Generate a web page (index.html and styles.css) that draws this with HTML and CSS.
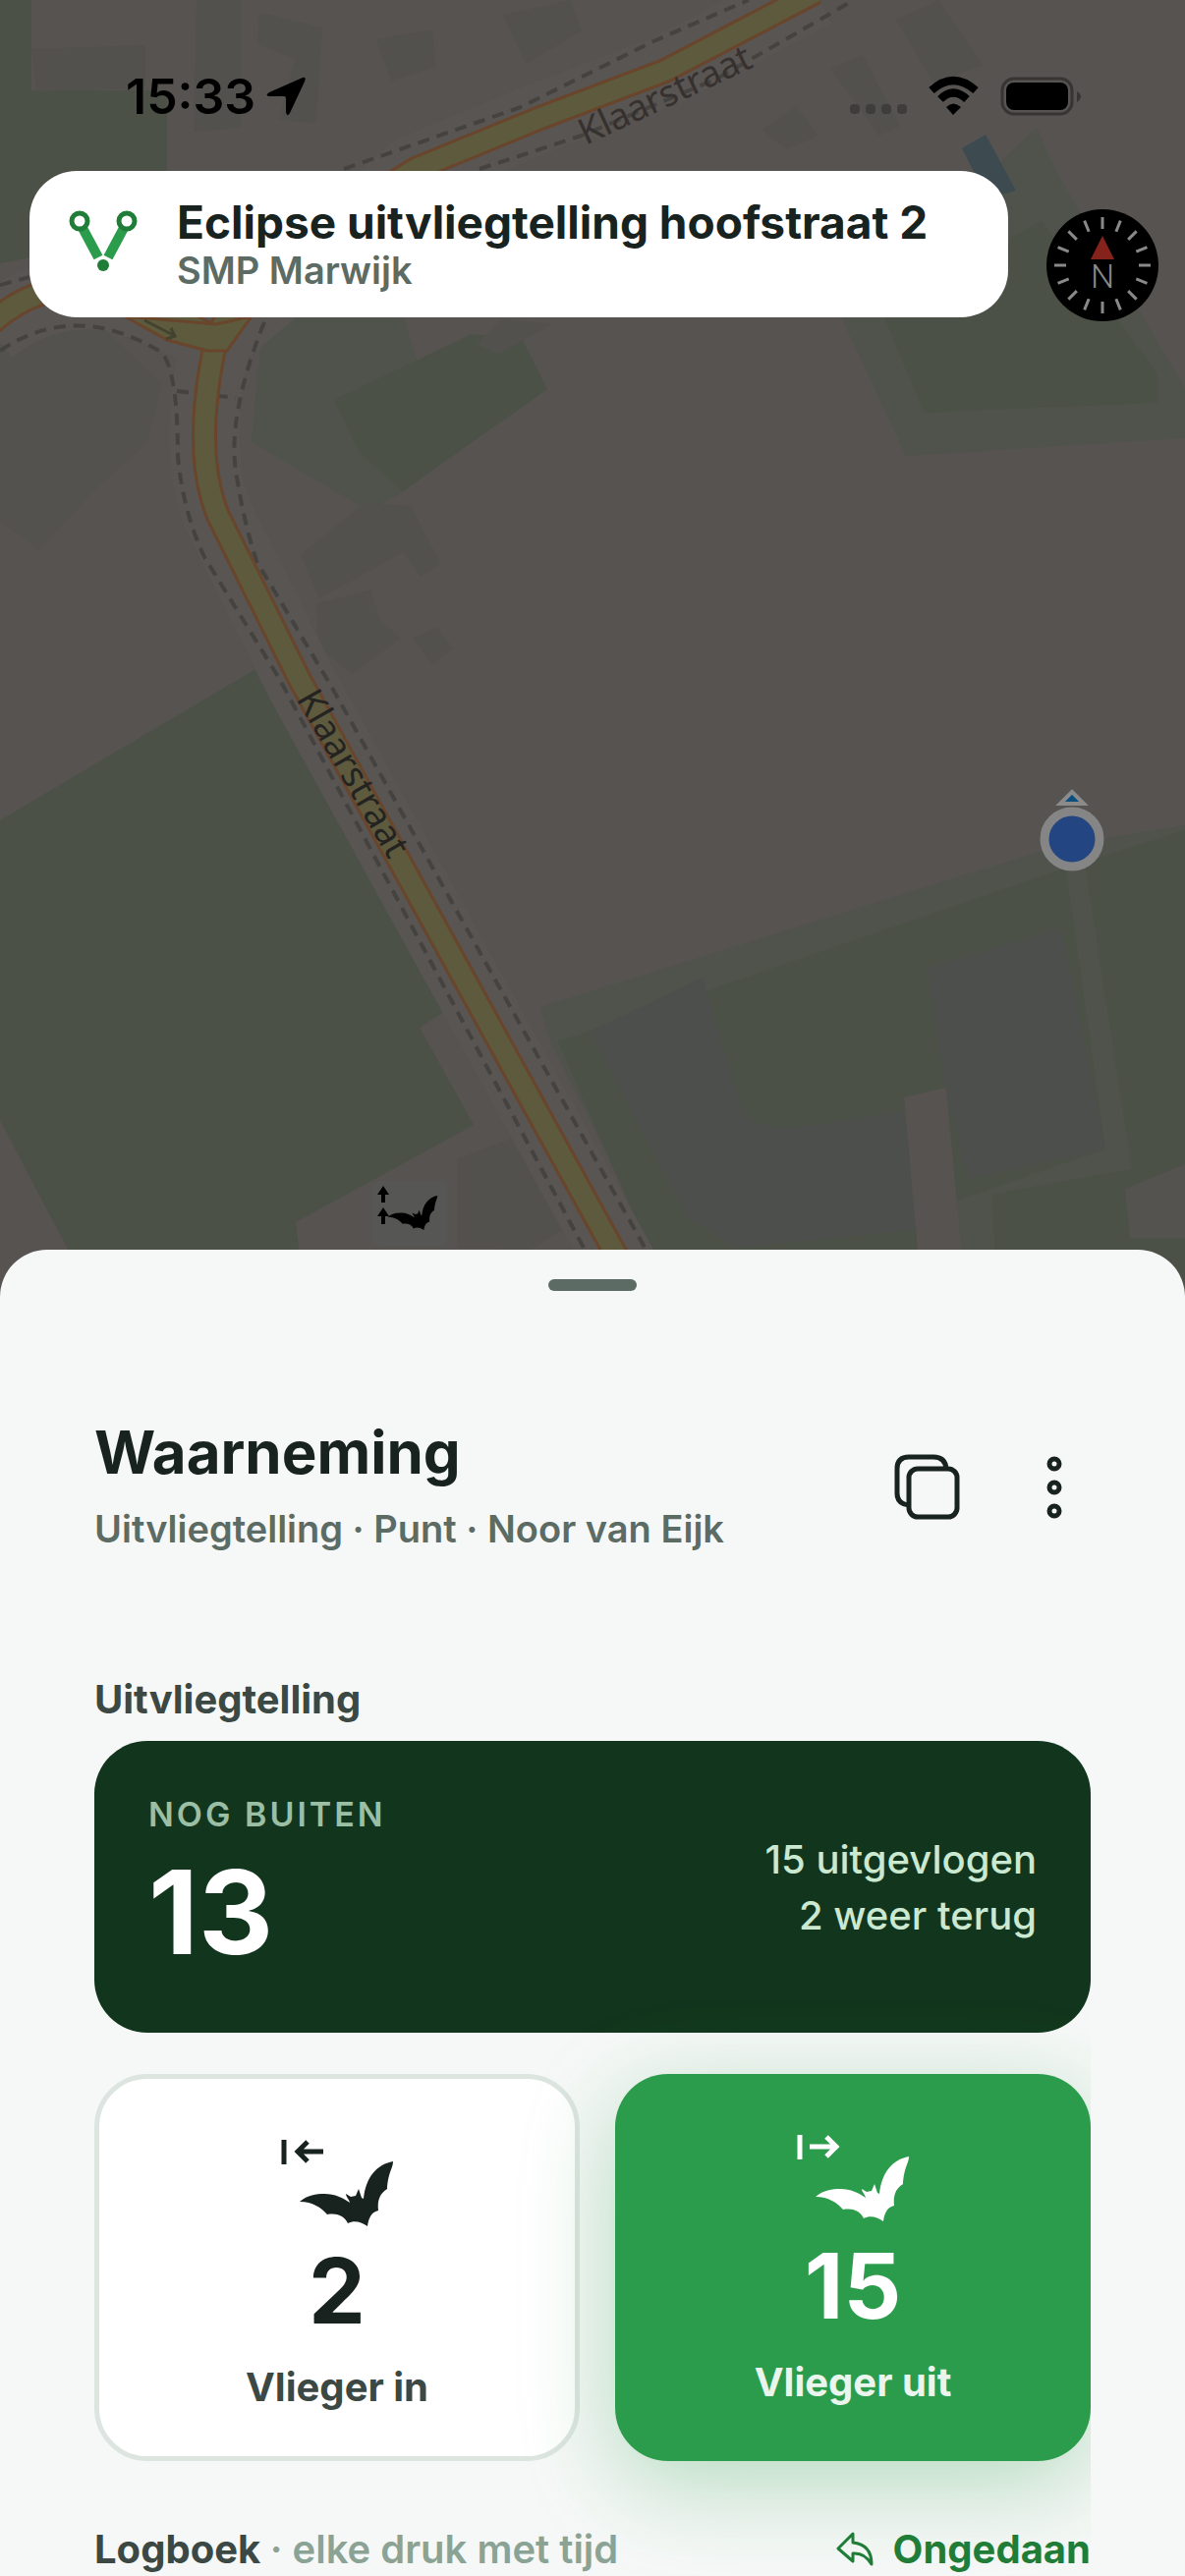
FILE: index.html
```
<!DOCTYPE html>
<html lang="nl">
<head>
  <meta charset="UTF-8">
  <meta name="viewport" content="width=device-width, initial-scale=1.0">
  <title>Waarneming</title>
  <link rel="stylesheet" href="styles.css">
</head>
<body>
  <svg class="symbols" aria-hidden="true">
    <symbol id="bat" viewBox="0 0 95 66">
      <path d="M0 41C8 34 17 33 25 33C36 33 44 37 51 42C50 38 47 36 47 33L52 36L57 35L60 28L63 37L65 38C67 17 78 3 95 0C95 7 90 11 89 28C81 33 79 40 80 50C72 52 70 59 69 66C62 61 55 60 49 63C46 57 40 52 28 54C22 47 13 41 0 41Z"/>
    </symbol>
  </svg>

  <div class="map">
    <svg class="map-tiles" viewBox="0 0 1206 1340" preserveAspectRatio="xMidYMin slice" aria-hidden="true">
      <rect width="1206" height="1340" fill="#565351"/>
      <!-- fields -->
      <path fill="#4b5146" d="M0 0H32V92H170V235L0 268Z"/>
      <path fill="#53524e" d="M0 330L100 330L165 390L150 450L95 500L40 560L0 530Z"/>
      <path fill="#50534c" d="M268 320H410L425 370L480 345L412 500L375 520L256 450Z"/>
      <path fill="#4b5146" d="M340 407L480 340L532 346L557 396L410 500L365 460Z"/>
      <path fill="#50534c" d="M855 320L1055 130L1075 175L1206 395V446L922 464Z"/>
      <path fill="#4b5146" d="M895 310L1060 225L1178 380V410L940 420Z"/>
      <path fill="#4b5146" d="M0 835L262 680L460 1025L427 1046L482 1145L301 1244L312 1340H105L0 1140Z"/>
      <path fill="#50534c" d="M550 1025L1080 860L1206 840V1340H700L560 1060Z"/>
      <path fill="#4b5146" d="M568 1060L1080 885L1206 845V1340H690Z"/>
      <path fill="#4d4f4c" d="M600 1050L715 995L755 1130Q775 1155 830 1145L925 1130L945 1250L750 1270L700 1240Z"/>
      <path fill="#4d4f4c" d="M944 985L1080 945L1125 1170L985 1200L962 1110Z"/>
      <path fill="#50534c" d="M1085 885H1105L1152 1190L1010 1215L1015 1340H930L950 1230L1125 1170Z"/>
      <path fill="#565351" d="M920 1117L963 1107L985 1340H940Z"/>
      <path fill="#555350" d="M1145 1210L1206 1185V1260L1150 1260Z"/>
      <path fill="#3d4a50" d="M979 151L1003 137L1034 194L1005 202Z"/>
      <!-- buildings -->
      <g fill="#53514e">
        <path d="M32 50L148 46V90L37 93Z"/>
        <path d="M200 0H245V130L197 134Z"/>
        <path d="M264 12L328 28L322 125L284 122L300 60L262 45Z"/>
        <path d="M383 40L440 30L444 68L398 82Z"/>
        <path d="M512 15L580 0L592 32L535 65Z"/>
        <path d="M912 20L955 0L1000 66L950 85Z"/>
        <path d="M845 70L878 56L916 128L895 138Z"/>
        <path d="M776 132L810 108L833 138L800 152Z"/>
        <path d="M306 565L370 512L418 515L449 574L428 587L410 562L325 609Z"/>
        <path d="M322 615L378 600L386 630L408 650L358 686L325 660Z"/>
        <path d="M420 650L444 638L461 660L440 677Z"/>
        <path d="M465 1180L530 1155L575 1250L540 1272L465 1270Z"/>
        <path d="M485 350L512 325L562 330L507 360Z"/>
      </g>
      <!-- roads -->
      <g fill="none" stroke-linejoin="round">
        <path stroke="#585553" stroke-width="72" d="M-10 335Q55 285 130 305Q195 330 220 345L423 172L550 120L677 72L830 -8M220 345Q195 460 222 525L304 690L645 1310"/>
        <path stroke="#454340" stroke-width="4" stroke-dasharray="12 8" d="M0 357Q77 305 165 359Q181 380 181 464Q186 520 208 567L285 692L610 1300M350 172L530 109L665 42L762 0M488 172L592 138L730 80L869 0M269 328Q228 430 242 491Q248 530 261 571L338 700L673 1300M180 398L240 405M0 290L30 282"/>
        <path stroke="#69452c" stroke-width="26" d="M-10 330Q50 275 130 300Q185 325 220 345C240 290 330 230 423 172L550 120L677 72L830 -8M220 345Q195 460 222 525L304 690L645 1310"/>
        <path stroke="#5d5a3e" stroke-width="20" d="M-10 330Q50 275 130 300Q185 325 220 345C240 290 330 230 423 172L550 120L677 72L830 -8M220 345Q195 460 222 525L304 690L645 1310"/>
      </g>
      <path fill="#5d5a3e" stroke="#69452c" stroke-width="3" d="M127 322L170 346L211 357H231L256 322L220 330Z"/>
      <path stroke="#444330" stroke-width="3" fill="none" d="M147 326L178 342M169 345L178 342L174 334"/>
      <g class="street">
        <text fill="#36312e" transform="translate(596 148) rotate(-25)">Klaarstraat</text>
        <text fill="#242321" transform="translate(301 711) rotate(60)">Klaarstraat</text>
      </g>
    </svg>

    <svg class="pin-bat" viewBox="0 0 80 70" aria-hidden="true">
      <rect width="75" height="66" rx="6" fill="#565655"/>
      <path d="M10 5L16 14H12V22H8V14H4ZM10 27L16 36H12V44H8V36H4Z"/>
      <use href="#bat" x="14" y="15" width="52" height="35"/>
    </svg>
    <svg class="pin-me" viewBox="0 0 70 90" aria-hidden="true">
      <path fill="#0a4f7e" stroke="#8b8b8b" stroke-width="4" d="M35 6L47 18H23Z"/>
      <circle cx="35" cy="54" r="28" fill="#234581" stroke="#858585" stroke-width="9"/>
    </svg>
  </div>

  <header class="top">
    <div class="statusbar">
      <div class="clock">
        <span>15:33</span>
        <svg width="42" height="42" viewBox="0 0 42 42" aria-hidden="true"><path d="M38 2Q42 1 40 6L25 38Q22 43 21 37V23Q21 21 19 21H4Q-1 20 4 17Z"/></svg>
      </div>
      <svg class="signals" width="240" height="44" viewBox="0 0 240 44" aria-hidden="true">
        <g fill="#3f3d3b"><rect y="30" width="10" height="10" rx="4"/><rect x="16" y="30" width="10" height="10" rx="4"/><rect x="32" y="30" width="10" height="10" rx="4"/><rect x="48" y="30" width="10" height="10" rx="4"/></g>
        <g fill="none" stroke="#000" stroke-width="8"><path d="M83 16Q105 -4 128 16"/><path d="M92 25Q105 12 119 25"/></g>
        <path d="M98 33Q105 26 113 33L105 41Z"/>
        <rect x="155" y="4" width="71" height="36" rx="12" fill="none" stroke="#363534" stroke-width="3"/>
        <rect x="159" y="8" width="63" height="28" rx="8"/>
        <path fill="#363534" d="M231 17Q239 22 231 28Z"/>
      </svg>
    </div>

    <div class="project-row">
      <div class="project">
        <svg width="76" height="76" viewBox="0 0 76 76" aria-hidden="true">
          <path fill="none" stroke="#2b9c4b" stroke-width="10" d="M16 21L32 51M58 21L42 51"/>
          <circle cx="13" cy="14" r="8" fill="#fff" stroke="#1f7d38" stroke-width="5"/>
          <circle cx="61" cy="14" r="8" fill="#fff" stroke="#1f7d38" stroke-width="5"/>
          <circle cx="37" cy="59" r="6" fill="#1f7d38"/>
        </svg>
        <div>
          <h1>Eclipse uitvliegtelling hoofstraat 2</h1>
          <p>SMP Marwijk</p>
        </div>
      </div>
      <button class="compass" type="button" aria-label="Kompas">
        <svg viewBox="-57 -57 114 114" aria-hidden="true">
          <circle r="57"/>
          <g stroke="#898989" stroke-width="3">
            <path id="ticks" d="M0 -49V-37M0 37V49M-49 0H-37M37 0H49"/>
            <use href="#ticks" transform="rotate(22)"/>
            <use href="#ticks" transform="rotate(45)"/>
            <use href="#ticks" transform="rotate(68)"/>
          </g>
          <path fill="#86221c" d="M0 -30L12 -6H-12Z"/>
          <text y="23">N</text>
        </svg>
      </button>
    </div>
  </header>

  <main class="sheet">
    <div class="grabber"></div>

    <div class="sheet-head">
      <div>
        <h2>Waarneming</h2>
        <p>Uitvliegtelling · Punt · Noor van Eijk</p>
      </div>
      <div class="actions">
        <button type="button" aria-label="Kopiëren">
          <svg width="72" height="72" viewBox="0 0 72 72" aria-hidden="true">
            <rect x="15" y="17" width="49" height="49" rx="9"/>
            <path d="M15 54Q3 53 3 42V17Q3 5 15 5H40Q52 5 53 17"/>
          </svg>
        </button>
        <button type="button" aria-label="Meer">
          <svg width="72" height="72" viewBox="0 0 72 72" aria-hidden="true">
            <circle cx="35" cy="12" r="5"/><circle cx="35" cy="36" r="5"/><circle cx="35" cy="60" r="5"/>
          </svg>
        </button>
      </div>
    </div>

    <section class="count">
      <h3>Uitvliegtelling</h3>

      <div class="summary">
        <div class="summary-main">
          <p class="summary-label">NOG BUITEN</p>
          <p class="summary-value">13</p>
        </div>
        <p class="summary-detail">15 uitgevlogen<br>2 weer terug</p>
      </div>

      <div class="counters">
        <button class="counter counter-in" type="button">
          <svg width="116" height="92" viewBox="0 0 116 92" aria-hidden="true">
            <path fill="none" stroke="currentColor" stroke-width="5" d="M4 2V27M44 14H18M28 4L18 14L28 24"/>
            <use href="#bat" x="20" y="24" width="95" height="66"/>
          </svg>
          <span class="counter-value">2</span>
          <span class="counter-label">Vlieger in</span>
        </button>
        <button class="counter counter-out" type="button">
          <svg width="116" height="92" viewBox="0 0 116 92" aria-hidden="true">
            <path fill="none" stroke="currentColor" stroke-width="5" d="M4 2V27M14 14H41M31 4L41 14L31 24"/>
            <use href="#bat" x="20" y="24" width="95" height="66"/>
          </svg>
          <span class="counter-value">15</span>
          <span class="counter-label">Vlieger uit</span>
        </button>
      </div>

      <div class="log-head">
        <h3>Logboek <span>· elke druk met tijd</span></h3>
        <button class="undo" type="button">
          <svg width="38" height="36" viewBox="0 0 38 36" aria-hidden="true"><path d="M17 2L2 17L17 30V22Q29 21 36 33Q36 13 17 11Z"/></svg>
          Ongedaan
        </button>
      </div>
    </section>
  </main>
</body>
</html>
```
FILE: styles.css
```
* {
  margin: 0;
  padding: 0;
  box-sizing: border-box;
}

body {
  position: relative;
  height: 100vh;
  overflow: hidden;
  display: flex;
  flex-direction: column;
  font-family: "Inter", "Liberation Sans", sans-serif;
  background: #565351;
  color: #18231f;
}

button {
  border: none;
  background: none;
  font: inherit;
  color: inherit;
  cursor: pointer;
}

svg {
  display: block;
  flex-shrink: 0;
}

.symbols {
  position: absolute;
  width: 0;
  height: 0;
}

/* map behind everything */
.map {
  position: absolute;
  inset: 0;
}

.map-tiles {
  width: 100%;
}

.street {
  font-family: "Noto Sans", sans-serif;
  font-size: 37px;
}

.pin-bat {
  position: absolute;
  left: 380px;
  top: 1202px;
  width: 80px;
}

.pin-me {
  position: absolute;
  left: 1056px;
  top: 800px;
  width: 70px;
}

/* status bar and project card */
.top {
  position: relative;
  flex: 1;
}

.statusbar {
  display: flex;
  justify-content: space-between;
  align-items: center;
  height: 174px;
  padding: 22px 101px 0 128px;
}

.clock {
  display: flex;
  align-items: center;
  gap: 10px;
  font-size: 50px;
  font-weight: 600;
  color: #000;
}

.project-row {
  display: flex;
  align-items: flex-start;
  gap: 39px;
  padding: 0 27px 0 30px;
}

.project {
  flex: 1;
  display: flex;
  align-items: center;
  gap: 36px;
  height: 149px;
  padding: 0 38px;
  border-radius: 48px;
  background: #fff;
}

.project h1 {
  font-size: 46px;
  line-height: 52px;
  font-weight: 700;
  white-space: nowrap;
}

.project p {
  font-size: 38px;
  line-height: 46px;
  font-weight: 600;
  color: #5c6b64;
}

.compass {
  width: 114px;
  height: 114px;
  margin-top: 39px;
}

.compass text {
  font-family: "Roboto", sans-serif;
  font-size: 34px;
  font-weight: 300;
  text-anchor: middle;
  fill: #898989;
}

/* bottom sheet */
.sheet {
  position: relative;
  height: 1350px;
  padding: 30px 96px 0;
  border-radius: 48px 48px 0 0;
  background: #f6f8f7;
}

.grabber {
  width: 90px;
  height: 12px;
  margin: 0 auto;
  border-radius: 6px;
  background: #5c6b64;
}

.sheet-head {
  display: flex;
  justify-content: space-between;
  align-items: center;
  padding-top: 122px;
}

.sheet-head h2 {
  font-size: 60px;
  line-height: 84px;
  font-weight: 700;
}

.sheet-head p {
  font-size: 38px;
  line-height: 72px;
  font-weight: 600;
  color: #5c6b64;
}

.actions {
  display: flex;
  gap: 56px;
}

.actions svg {
  fill: none;
  stroke: #18231f;
  stroke-width: 5px;
}

.count h3 {
  font-size: 40px;
  line-height: 48px;
  font-weight: 700;
  color: #3c4843;
}

.count {
  padding-top: 114px;
  overflow: hidden;
}

.summary {
  display: flex;
  justify-content: space-between;
  align-items: center;
  height: 297px;
  margin-top: 18px;
  padding: 0 55px;
  border-radius: 54px;
  background: #12361d;
  color: #fff;
}

.summary-main {
  padding-top: 8px;
}

.summary-label {
  font-size: 34px;
  line-height: 42px;
  font-weight: 600;
  letter-spacing: 3px;
  color: #9bbfa4;
}

.summary-value {
  font-size: 118px;
  line-height: 156px;
  font-weight: 700;
}

.summary-detail {
  font-size: 40px;
  line-height: 57px;
  font-weight: 500;
  text-align: right;
  color: #cbe8d1;
}

.counters {
  display: flex;
  gap: 36px;
  margin-top: 42px;
}

.counter {
  flex: 1 1 0;
  display: flex;
  flex-direction: column;
  align-items: center;
  height: 394px;
  padding-top: 60px;
  border-radius: 54px;
}

.counter svg {
  margin-bottom: 4px;
  fill: currentColor;
}

.counter-in {
  border: 5px solid #dde5e1;
  background: #fff;
}

.counter-out {
  background: #2b9c4b;
  color: #fff;
  box-shadow: 0 24px 96px rgba(43, 156, 75, 0.32);
}

.counter-value {
  font-size: 92px;
  line-height: 120px;
  font-weight: 700;
}

.counter-label {
  font-size: 40px;
  line-height: 76px;
  font-weight: 700;
  color: #3c4843;
}

.counter-out .counter-label {
  color: #eaf5ed;
}

.log-head {
  display: flex;
  justify-content: space-between;
  align-items: center;
  padding: 66px 0 80px;
}

.log-head h3 span {
  font-weight: 600;
  color: #8ba395;
}

.undo {
  display: flex;
  align-items: center;
  gap: 20px;
  font-size: 40px;
  line-height: 48px;
  font-weight: 700;
  color: #1f7d38;
}

.undo svg {
  fill: none;
  stroke: #1f7d38;
  stroke-width: 3px;
  stroke-linejoin: round;
}
```
